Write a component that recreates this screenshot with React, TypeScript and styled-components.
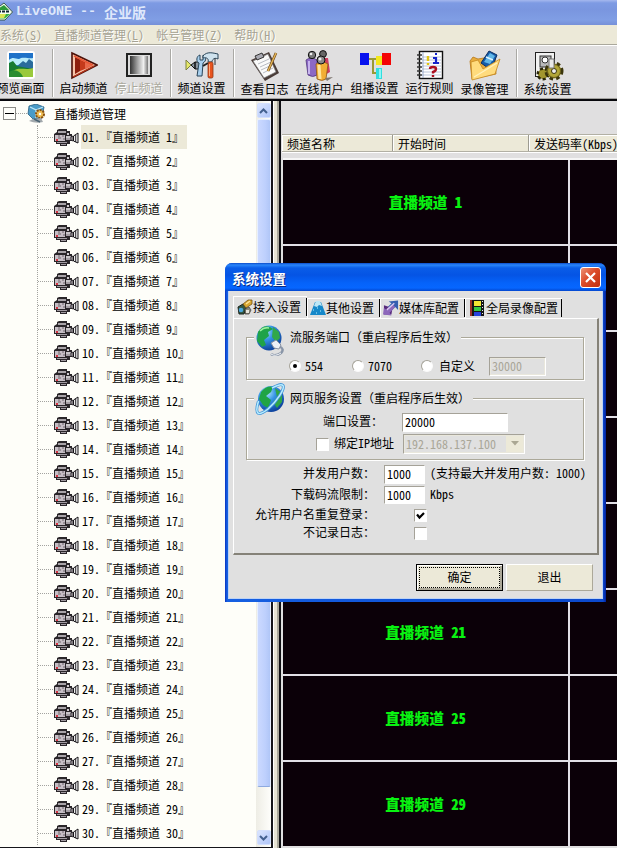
import type { ReactNode } from "react";
import styled, { createGlobalStyle } from "styled-components";

const GlobalStyle = createGlobalStyle`
    * {
        box-sizing: border-box;
    }
    body {
        margin: 0;
        overflow: hidden;
        background: #e0dfe0;
        color: #000;
        font-family: "Noto Sans CJK SC", sans-serif;
        font-feature-settings: "hwid" 1;
        font-size: 12px;
        line-height: 14px;
    }
    svg {
        display: block;
        flex: none;
    }
`;

/* ---------- icons ---------- */

const LogoIcon = () => (
    <svg width="13" height="20" viewBox="0 0 13 20">
        <path d="M-8 10 L4 1 L12.5 10 L5 18 L-2 18 Z" fill="#f4fff0" stroke="#1d3d22" strokeWidth="0.8" />
        <path d="M-4 8 L4 3 L9 8 Z" fill="#2c9a38" />
        <path d="M-3 12 H10 L5 16.5 H-1 Z" fill="#35b246" />
        <path d="M-2 9.5 H10" stroke="#123" strokeWidth="2" strokeDasharray="3 1" />
        <path d="M0 12 H6 L4 16 H0 Z" fill="#d9e453" />
    </svg>
);

const PreviewIcon = () => (
    <svg width="28" height="30" viewBox="0 0 28 30">
        <rect x="0" y="1" width="28" height="28" rx="3" fill="#fff" />
        <rect x="2" y="3" width="24" height="24" fill="#2c8fd8" />
        <path d="M2 3 H26 V9 H2 Z" fill="#1f72c8" />
        <path d="M2 10 C7 5 10 11 14 8 C19 7 22 9 26 8 V15 H2 Z" fill="#b9ecfa" />
        <path d="M9 17 L16 11 L19 13 L22 9 L26 12 V22 H9 Z" fill="#2a6c9c" />
        <path d="M2 13 L6 11 L10 16 L15 17 L26 19 V27 H2 Z" fill="#167b32" />
        <path d="M5 22 C12 16 18 21 26 18 V27 H5 Z" fill="#9ac93c" />
        <path d="M2 22 C8 18 14 22 16 27 H2 Z" fill="#2b8d31" />
    </svg>
);

const StartIcon = () => (
    <svg width="28" height="30" viewBox="0 0 28 30">
        <path d="M2 3 L27 15 L2 28 Z" fill="#f6c3a8" stroke="#4d1008" strokeWidth="1.6" />
        <path d="M5 7 L10 9.5 V21 L5 24 Z" fill="#8c1e0d" />
        <path d="M10 9.5 L15 12 V19 L10 21 Z" fill="#c53a1b" />
        <path d="M15 11 L22 14.5 V16 L15 19.5 Z" fill="#e8694a" />
        <path d="M4 6 L23 15" stroke="#e85533" strokeWidth="1.4" />
        <path d="M3 27 L24 16" stroke="#b53217" strokeWidth="1.4" />
    </svg>
);

const StopIcon = () => (
    <svg width="28" height="30" viewBox="0 0 28 30">
        <defs>
            <linearGradient id="stop-fill" x1="0" x2="1">
                <stop offset="0" stopColor="#333" />
                <stop offset="0.45" stopColor="#aaa" />
                <stop offset="0.75" stopColor="#f0f0f0" />
                <stop offset="1" stopColor="#777" />
            </linearGradient>
        </defs>
        <rect x="1" y="3" width="26" height="24" fill="#222" />
        <rect x="3" y="5" width="22" height="20" fill="#dcdcdc" />
        <rect x="5" y="6" width="18" height="18" fill="url(#stop-fill)" />
    </svg>
);

const ToolsIcon = () => (
    <svg width="34" height="30" viewBox="0 0 34 30">
        <path d="M1 10 L6 15 L1 20 Z" fill="#e6e96a" stroke="#7c8040" />
        <path d="M6 15 L10 12 V19 Z M10 12 H15 V19 H10 Z" fill="#8c969f" stroke="#111" />
        <path d="M15 5 C11 6 11 12 14 13 L12 26 H17 L18 13 C22 11 21 6 18 5 V10 H15 Z" fill="#a9d0ee" stroke="#284458" />
        <path d="M18 6 C22 1 28 3 33 4 V9 C29 7 27 10 27 12 H23 C24 9 22 7 18 8 Z" fill="#cfe2ee" stroke="#284458" />
        <rect x="23" y="12" width="5" height="16" rx="1.5" fill="#e8541e" stroke="#8e3818" strokeWidth="0.8" />
        <path d="M24.5 14 V26" stroke="#ffab7b" />
        <path d="M18 16 L23 13" stroke="#222" strokeWidth="2" />
        <path d="M30 8 V15" stroke="#26313b" />
    </svg>
);

const LogIcon = () => (
    <svg width="32" height="32" viewBox="0 0 32 32">
        <path d="M2 10 L20 2 L30 23 L16 31 Z" fill="#4a3c38" />
        <path d="M4 11 L19 4 L27 22 L15 28 Z" fill="#fafafa" stroke="#777" strokeWidth="0.7" />
        <path d="M6 6 L13 3 L15 7 L8 10 Z" fill="#a9a9b2" stroke="#333" />
        <path d="M9 14 L20 9 M11 17 L22 12 M12 20 L23 15 M14 23 L24 18" stroke="#a6a9b3" strokeWidth="0.8" />
        <path d="M27 3 L19 21" stroke="#6e4411" strokeWidth="2.6" />
        <path d="M27 3 L19 21" stroke="#e3b659" strokeWidth="1.4" />
    </svg>
);

const UsersIcon = () => (
    <svg width="30" height="32" viewBox="0 0 30 32">
        <path d="M14 8 H23 L25 22 L18 26 Z" fill="#ce3d60" />
        <path d="M1 10 Q6 6 12 10 L12 25 Q8 28 3 25 Z" fill="#8c69c4" stroke="#51377f" strokeWidth="0.8" />
        <path d="M4 11 V24" stroke="#c7b3ee" strokeWidth="2" />
        <path d="M11 14 Q17 10 23 14 L21 29 Q17 32 12 29 Z" fill="#f2ae35" stroke="#8c571b" strokeWidth="0.8" />
        <path d="M14 15 L15 29" stroke="#ffe59a" strokeWidth="3" />
        <path d="M20 28 L28 27 L22 31 Z" fill="#7d756f" />
        <circle cx="7" cy="5" r="3.7" fill="#777" stroke="#111" />
        <circle cx="18" cy="4" r="3.4" fill="#666" stroke="#111" />
        <circle cx="16" cy="10" r="4" fill="#8a8a8a" stroke="#111" />
        <circle cx="15" cy="9" r="1.5" fill="#eee" />
        <circle cx="6" cy="4" r="1.3" fill="#eee" />
    </svg>
);

const MulticastIcon = () => (
    <svg width="32" height="30" viewBox="0 0 32 30" shapeRendering="crispEdges">
        <path d="M9 9 H22 M14 9 V23 H18" stroke="#9a9a35" strokeWidth="1.5" fill="none" />
        <rect x="1" y="3" width="9" height="12" fill="#0712ee" />
        <rect x="17" y="6" width="6" height="9" fill="#f3e81b" />
        <rect x="23" y="3" width="9" height="12" fill="#f40505" />
        <rect x="17" y="18" width="6" height="11" fill="#31dede" />
        <rect x="20" y="19" width="2" height="9" fill="#8ff5f5" />
    </svg>
);

const RulesIcon = () => (
    <svg width="28" height="30" viewBox="0 0 28 30">
        <rect x="3.5" y="1.5" width="23" height="27" fill="#fff" stroke="#111" strokeWidth="1.4" />
        <path d="M6 7 H25 M6 10 H25 M6 13 H25 M6 16 H25 M6 19 H25 M6 22 H25 M6 25 H25" stroke="#aab7cf" strokeWidth="0.8" />
        <path d="M7 2 V28" stroke="#879ac0" strokeWidth="0.8" />
        <path d="M1 5 H6 M1 9 H6 M1 13 H6 M1 17 H6 M1 21 H6 M1 25 H6" stroke="#333" strokeWidth="1.3" />
        <path d="M12 6 V11 M12 13 V15" stroke="#e0c313" strokeWidth="2.4" />
        <path d="M17 8 H20 V13 M17 13 H23 M19 4 H21" stroke="#1524cb" strokeWidth="2.2" fill="none" />
        <path d="M14 19 Q14 17 17 17 Q20 17 20 19 Q20 21 17 22 V23.5 M17 25 V27" stroke="#ab1020" strokeWidth="2.4" fill="none" />
    </svg>
);

const RecordIcon = () => (
    <svg width="32" height="32" viewBox="0 0 32 32">
        <path d="M1 11 L4 7 L9 9 L26 6 L27 24 L3 29 Z" fill="#e8ad3e" stroke="#b87716" strokeWidth="0.8" />
        <path d="M12 13 L20 1 L28 5 L22 20 Z" fill="#155ca9" stroke="#0b2e63" />
        <path d="M15 12 L21 3 L26 6 L21 14 Z" fill="#62b7e8" />
        <path d="M17 7 L24 10" stroke="#dff4ff" strokeWidth="1.4" />
        <path d="M2 12 L9 10 L14 19 L31 9 L26 24 L3 30 Z" fill="#ffdb7d" stroke="#c78921" strokeWidth="0.8" />
        <path d="M5 27 L15 21 L28 13" stroke="#fff1bd" strokeWidth="1.2" fill="none" />
    </svg>
);

const GearsIcon = () => (
    <svg width="32" height="32" viewBox="0 0 32 32">
        <rect x="3.5" y="2.5" width="19" height="24" fill="#f2f2f2" stroke="#222" />
        <rect x="8" y="6" width="11" height="11" fill="#b9b9b9" stroke="#333" />
        <circle cx="13" cy="10" r="3" fill="#fff" stroke="#333" />
        <circle cx="11" cy="24" r="5" fill="#8b8126" stroke="#2c2807" strokeWidth="3" strokeDasharray="3 2" />
        <circle cx="11" cy="24" r="4" fill="#a2962e" />
        <circle cx="22" cy="21" r="7.5" fill="#a99d30" stroke="#3c360c" strokeWidth="4" strokeDasharray="3.3 3" />
        <circle cx="22" cy="21" r="6.5" fill="#b2a638" stroke="#6c621b" />
        <circle cx="22" cy="21" r="2.5" fill="#eee" stroke="#3c360c" />
        <path d="M17 9 H22 V18 H17 Z" fill="#e9e9e9" stroke="#777" />
    </svg>
);

const ServerIcon = () => (
    <svg width="20" height="20" viewBox="0 0 20 20">
        <path d="M2 2 L9 0 L17 3 L15 14 L6 15 L1 10 Z" fill="#499bc8" stroke="#245c7d" strokeWidth="0.8" />
        <path d="M3 3 L9 6 V14 M9 6 L16 3" stroke="#bee7f6" fill="none" strokeWidth="1.3" />
        <circle cx="13" cy="10" r="4" fill="#edbd52" stroke="#885010" strokeWidth="2" strokeDasharray="2 1" />
        <circle cx="13" cy="10" r="1.2" fill="#fff" />
        <path d="M2 17 Q9 20 16 18 L14 14 L6 15 Z" fill="#a2a9ad" />
        <path d="M7 15 L13 18" stroke="#4b6372" strokeWidth="1.5" />
    </svg>
);

const CameraIcon = () => (
    <svg width="26" height="19" viewBox="0 0 26 19">
        <path d="M1 6 L4 4 V2 L6 1 H14 V3 H17 V6 H19 V13 H17 V16 H14 V18 H7 V16 H3 V14 H1 Z" fill="#2a262a" />
        <path d="M5 3 H13 V5 H5 Z" fill="#a9a4a9" />
        <path d="M2 7 H12 V13 H2 Z" fill="#c6bec5" />
        <path d="M5 8 H7 M9 8 H11 M5 10 H8 M10 11 H12" stroke="#6d656c" strokeWidth="1" />
        <rect x="3" y="11" width="2" height="2" fill="#d33140" />
        <path d="M14 5 H16 V7 H14 Z" fill="#d2ccd1" />
        <path d="M13 8 H18 V12 H13 Z" fill="#a59ea4" />
        <path d="M13 9 H17" stroke="#eee" />
        <path d="M4 14 H14 V15 H4 Z M8 16 H13 V17 H8 Z" fill="#a39ca3" />
        <path d="M18 9 L20 8 V13 L18 12 Z" fill="#c8c2c7" stroke="#151317" strokeWidth="0.8" />
        <path d="M20.5 8 L25 5 V15 L20.5 13 Z" fill="#eee" stroke="#151317" strokeWidth="1" />
        <path d="M22.7 7 V14" stroke="#151317" strokeWidth="0.9" />
    </svg>
);

const PlugIcon = () => (
    <svg width="16" height="16" viewBox="0 0 16 16">
        <path d="M1 8 L6 5 L9 9 L7 15 L2 15 Z" fill="#35573f" stroke="#1b241d" />
        <circle cx="4" cy="11" r="2.3" fill="#4ba7dd" />
        <path d="M6 5 L11 1 L15 1 L15 5 L12 7 L9 9 Z" fill="#d9a832" stroke="#76500f" strokeWidth="0.8" />
        <path d="M8 10 L12 8 L14 11 L12 15 H8 Z" fill="#8f8b7a" stroke="#333" strokeWidth="0.7" />
        <path d="M9 5 L13 2" stroke="#ffe79b" strokeWidth="1.3" />
        <path d="M9 11 H12 V14 H9 Z" fill="#e8e6dd" />
    </svg>
);

const PyramidIcon = () => (
    <svg width="16" height="16" viewBox="0 0 16 16">
        <path d="M5 2 H11 L16 15 H0 Z" fill="#1688c9" />
        <path d="M6 1 H10 L12 6 L9 5 L7 7 L4 6 Z" fill="#bde6f5" />
        <path d="M3 10 H4 M7 8 H8 M10 11 H11 M6 13 H7" stroke="#b9f2ff" strokeWidth="1" />
    </svg>
);

const MediaIcon = () => (
    <svg width="16" height="16" viewBox="0 0 17 16">
        <path d="M6 1 L16 0 V10 L13 7 L8 12 L4 8 L9 3 Z" fill="#355eb0" />
        <path d="M1 5 L10 8 L9 15 H1 Z" fill="#582c7d" />
        <path d="M0 15 L1 8 L4 10 L10 4 L13 7 L7 13 L9 16 Z" fill="#8d68bb" />
        <path d="M4 10 L12 3" stroke="#d8c9f2" strokeWidth="1.5" />
    </svg>
);

const FilmIcon = () => (
    <svg width="18" height="16" viewBox="-2 0 18 16" shapeRendering="crispEdges">
        <rect width="14" height="16" fill="#151515" />
        <rect x="4" y="1" width="7" height="5" fill="#f3e532" />
        <rect x="4" y="7" width="7" height="4" fill="#35c943" />
        <rect x="4" y="12" width="7" height="4" fill="#2742dd" />
        <rect x="0" y="0" width="2" height="16" fill="#9d3029" />
        <path d="M12.5 1 V16" stroke="#eee" strokeDasharray="1 2" />
    </svg>
);

const GlobeMouseIcon = () => (
    <svg width="32" height="32" viewBox="0 0 32 32">
        <defs>
            <radialGradient id="ocean" cx="0.35" cy="0.25" r="0.8">
                <stop offset="0" stopColor="#b5e8ff" />
                <stop offset="0.4" stopColor="#3695e5" />
                <stop offset="1" stopColor="#0a3c98" />
            </radialGradient>
        </defs>
        <circle cx="15" cy="14" r="12.5" fill="url(#ocean)" />
        <path d="M4 8 Q9 0 16 3 L19 5 L14 8 L15 12 L10 16 L12 21 L8 23 L3 17 Z" fill="#1fa349" />
        <path d="M19 3 L25 8 L26 14 L22 18 L18 13 Z" fill="#31a84a" />
        <path d="M6 7 Q10 3 15 4" stroke="#9ef0a1" strokeWidth="1.6" fill="none" />
        <path d="M17 30 Q21 33 27 29 Q31 25 25 22" stroke="#8a96a8" strokeWidth="2.5" fill="none" />
        <path d="M17 19 L22 16 L27 21 L25 25 L20 24 Z" fill="#eceff6" stroke="#8790a1" />
        <path d="M17 30 Q21 33 27 29" stroke="#f5f7fa" fill="none" />
    </svg>
);

const BrowserIcon = () => (
    <svg width="32" height="32" viewBox="0 0 32 32">
        <circle cx="17" cy="16" r="13" fill="url(#ocean)" />
        <path d="M7 9 Q13 2 19 4 L17 9 L12 13 L17 17 L14 25 L9 22 L5 16 Z" fill="#20a445" />
        <path d="M21 5 L28 10 L28 19 L23 25 L19 19 L23 14 Z" fill="#2fa547" />
        <path d="M4.5 18 C0 33 5 33 14 26 C23 18 31 6 29 2.5 C27 0 22 3 18 5" fill="none" stroke="#3f94d8" strokeWidth="3" />
        <path d="M4.5 18 C0 33 5 33 14 26 C23 18 31 6 29 2.5 C27 0 22 3 18 5" fill="none" stroke="#b9edff" strokeWidth="1.5" />
    </svg>
);

const Chevron = ({ down = false }: { down?: boolean }) => (
    <svg width="9" height="6" viewBox="0 0 9 6">
        <path d={down ? "M1 1 L4.5 4.5 L8 1" : "M1 5 L4.5 1.5 L8 5"} fill="none" stroke="#43608f" strokeWidth="2" />
    </svg>
);

/* ---------- main window ---------- */

const Screen = styled.div`
    position: relative;
    display: flex;
    flex-direction: column;
    width: 617px;
    height: 848px;
    overflow: hidden;
    white-space: nowrap;
    background: #e0dfe0;
`;

const TitleBar = styled.header`
    display: flex;
    align-items: center;
    height: 25px;
    padding-bottom: 2px;
    color: #dfe8fb;
    font-size: 14px;
    font-weight: 700;
    line-height: 22px;
    background: linear-gradient(#a5b8ee 0, #7d9ae3 3px, #7a96df 10px, #809ee4 20px, #7690d8 25px);

    svg {
        margin-right: 3px;
    }
`;

const Mono = styled.span`
    font-family: "Liberation Mono", monospace;
    font-size: 13.33px;
    white-space: pre;
`;

const MenuBar = styled.nav`
    display: flex;
    align-items: center;
    gap: 12px;
    height: 19px;
    color: #a5a293;
    background: #ece9d8;
    text-shadow: 1px 1px #fff;
`;

const ToolBar = styled.div`
    display: flex;
    height: 57px;
    background: #e0dfe0;
    border-top: 1px solid #aaa89c;
    border-bottom: 2px solid #08080c;
    box-shadow: inset 0 1px #fff, inset 0 -1px #a4a3a0;
`;

const ToolButton = styled.div<{ $disabled?: boolean }>`
    display: flex;
    flex: none;
    flex-direction: column;
    align-items: center;
    justify-content: space-between;
    width: 55px;
    height: 50px;
    padding-top: 5px;
    color: ${({ $disabled }) => ($disabled ? "#aaa89c" : "#000")};
    text-shadow: ${({ $disabled }) => ($disabled ? "1px 1px #fff" : "none")};

    &:first-child {
        margin-left: -7px;
    }
`;

const ToolDivider = styled.div`
    flex: none;
    width: 8px;
    height: 48px;
    margin-top: 4px;
    background: linear-gradient(90deg, transparent 4px, #aaa9a5 4px, #aaa9a5 5px, #fff 5px, #fff 6px, transparent 6px);
`;

const Main = styled.main`
    display: flex;
    flex: 1;
    min-height: 0;
`;

const Tree = styled.aside`
    display: flex;
    width: 273px;
    background: #fefef9;
    border-right: 2px solid #15151a;
    border-bottom: 1px solid #15151a;
`;

const TreeList = styled.div`
    flex: 1;
    padding-top: 1px;
    overflow: hidden;
`;

const TreeRoot = styled.div`
    display: flex;
    align-items: center;
    height: 23px;
    padding-left: 3px;
`;

const Expander = styled.span`
    display: flex;
    align-items: center;
    justify-content: center;
    width: 13px;
    height: 13px;
    border: 1px solid #8b8b86;

    &::before {
        content: "";
        width: 9px;
        height: 1px;
        background: #000;
    }
`;

const Dots = styled.span<{ $width: number }>`
    width: ${({ $width }) => $width}px;
    border-top: 1px dotted #a3a3a0;
`;

const RootName = styled.span`
    margin-left: 7px;
`;

const Branch = styled.div`
    margin-left: 37px;
    border-left: 1px dotted #a3a3a0;
`;

const TreeItem = styled.div`
    display: flex;
    align-items: center;
    height: 24px;
`;

const ItemName = styled.span<{ $selected?: boolean }>`
    margin-left: 2px;
    padding: 0 3px 0 1px;
    line-height: 24px;
    white-space: pre;
    background: ${({ $selected }) => ($selected ? "#ece9d8" : "transparent")};
`;

const ScrollBar = styled.div`
    display: flex;
    flex-direction: column;
    align-items: center;
    width: 15px;
    padding: 2px 0 1px;
    background: linear-gradient(90deg, #eeede5, #fefefb);
`;

const ScrollButton = styled.div`
    display: flex;
    flex: none;
    align-items: center;
    justify-content: center;
    width: 14px;
    height: 15px;
    border: 1px solid #d3dffd;
    border-radius: 2px;
    background: linear-gradient(135deg, #dbe5ff, #afc5f8);
`;

const ScrollThumb = styled.div`
    flex: none;
    width: 14px;
    height: 668px;
    margin: 1px 0 43px;
    border: 1px solid #e7efff;
    border-bottom-color: #8eaae0;
    border-radius: 2px;
    background: linear-gradient(90deg, #cbd9ff, #bed0fd 60%, #b0c6f7);
`;

const Splitter = styled.div`
    width: 6px;
    background: linear-gradient(90deg, #fff 1px, #e7e4d5 1px, #e7e4d5 4px, #aaa89c 4px);
`;

const Monitor = styled.section`
    flex: 1;
    min-width: 0;
    padding: 33px 0 0 2px;
    border-left: 2px solid #101014;
    overflow: hidden;
`;

const ListHeader = styled.div`
    display: flex;
    height: 18px;
    width: 400px;
    margin-left: -1px;
    background: #ece9d8;
    border-top: 1px solid #b2b0a4;
    border-bottom: 1px solid #b2b0a4;
    box-shadow: 0 1px #fff;
`;

const HeaderCell = styled.div<{ $width: number }>`
    flex: none;
    width: ${({ $width }) => $width}px;
    padding-left: 5px;
    line-height: 17px;
    border-right: 1px solid #9d9b91;
    box-shadow: inset 1px 1px #fff;
`;

const Grid = styled.div`
    display: grid;
    grid-template-columns: 285px 100px;
    grid-auto-rows: 84px;
    gap: 2px;
    margin-top: 6px;
    width: 387px;
    border-top: 2px solid #f5f5f5;
    background: #e2dfe6;
`;

const Channel = styled.div`
    display: flex;
    align-items: center;
    justify-content: center;
    background: #0b0008;
    color: #09f211;
    font-size: 14.67px;
    font-weight: 900;
`;

/* ---------- settings dialog ---------- */

const Dialog = styled.div`
    position: absolute;
    top: 263px;
    left: 225px;
    width: 381px;
    height: 339px;
    padding: 0 3px 3px;
    border-radius: 7px 7px 0 0;
    background: linear-gradient(90deg, #0831c0, #1660e2 2px, #0b48cc 378px, #001f9c);
`;

const DialogTitle = styled.div`
    display: flex;
    align-items: center;
    justify-content: space-between;
    height: 28px;
    margin: 0 -3px;
    padding: 1px 5px 0 7px;
    color: #fff;
    font-size: 13.5px;
    font-weight: 700;
    text-shadow: 1px 1px #0a2b82;
    border-radius: 7px 7px 0 0;
    background: linear-gradient(#0b4bc9 0, #2a86fa 2px, #0a5de8 5px, #0554e4 12px, #0563fa 20px, #0666ff 25px, #0347ce 28px);
`;

const Close = styled.button`
    display: flex;
    align-items: center;
    justify-content: center;
    width: 21px;
    height: 21px;
    padding: 0;
    border: 1px solid #fff;
    border-radius: 3px;
    background: linear-gradient(135deg, #ec9277, #dc4b29 45%, #c02f0e);
`;

const DialogBody = styled.div`
    height: 308px;
    padding: 5px 2px 0 4px;
    background: #e0e0e0;
    border: 1px solid #bdd3f4;
    border-top: 0;
`;

const Tabs = styled.div`
    display: flex;
    align-items: flex-end;
    height: 22px;
`;

const Tab = styled.div<{ $width: number; $active?: boolean }>`
    display: flex;
    flex: none;
    align-items: center;
    width: ${({ $width }) => $width}px;
    height: ${({ $active }) => ($active ? 22 : 20)}px;
    padding: 0 0 ${({ $active }) => ($active ? "2px 3px" : "1px 2px")};
    border-top: 1px solid #fff;
    border-left: 1px solid #fff;

    &::after {
        content: "";
        align-self: flex-end;
        width: 1px;
        height: 18px;
        margin-left: auto;
        background: #000;
    }
`;

const TabPage = styled.div`
    width: 366px;
    height: 237px;
    padding: 18px 0 0 12px;
    border: 1px solid #fff;
    border-right: 2px solid #858278;
    border-bottom: 2px solid #858278;
`;

const Group = styled.div<{ $height: number }>`
    width: 338px;
    height: ${({ $height }) => $height}px;
    margin-bottom: 18px;
    padding-left: 7px;
    border: 1px solid #aba899;
    box-shadow: inset 1px 1px #fff, 1px 1px #fff;
`;

const Legend = styled.div<{ $lift: number }>`
    display: flex;
    width: max-content;
    height: 32px;
    margin-top: -${({ $lift }) => $lift}px;
    padding-right: 3px;
    line-height: ${({ $lift }) => $lift * 2 - 3}px;
    font-feature-settings: normal;
    text-spacing-trim: space-all;
    background: #e0e0e0;

    svg {
        margin-right: 4px;
    }
`;

const Line = styled.div<{ $height?: number; $indent?: number; $top?: number }>`
    display: flex;
    align-items: center;
    height: ${({ $height }) => $height || 20}px;
    margin-top: ${({ $top }) => $top || 0}px;
    margin-left: ${({ $indent }) => $indent || 0}px;
`;

const Radio = styled.span<{ $checked?: boolean }>`
    display: flex;
    align-items: center;
    justify-content: center;
    width: 12px;
    height: 12px;
    border: 1px solid;
    border-color: #a5a298 #fafafa #fafafa #a5a298;
    border-radius: 50%;
    background: #fff;

    &::before {
        content: "";
        width: 4px;
        height: 4px;
        border-radius: 50%;
        background: ${({ $checked }) => ($checked ? "#000" : "transparent")};
    }
`;

const Option = styled.span<{ $width: number; $gap?: number }>`
    display: flex;
    align-items: center;
    gap: ${({ $gap }) => $gap || 4}px;
    width: ${({ $width }) => $width}px;
    padding-bottom: 1px;
`;

const Input = styled.div<{ $width: number; $height: number; $disabled?: boolean }>`
    display: flex;
    align-items: center;
    width: ${({ $width }) => $width}px;
    height: ${({ $height }) => $height}px;
    padding: 0 0 1px 2px;
    color: ${({ $disabled }) => ($disabled ? "#a9a698" : "#000")};
    background: ${({ $disabled }) => ($disabled ? "#e0e0e0" : "#fff")};
    border: 1px solid;
    border-color: #a5a298 #fff #fff #a5a298;
    outline: ${({ $disabled }) => ($disabled ? "1px solid #e9e7dc" : "0")};
    outline-offset: -2px;
`;

const DropArrow = styled.span`
    display: flex;
    align-items: center;
    justify-content: center;
    width: 18px;
    height: 17px;
    margin-left: auto;
    background: #ece9d8;
`;

const Check = styled.span`
    display: flex;
    align-items: center;
    justify-content: center;
    width: 13px;
    height: 13px;
    border: 1px solid;
    border-color: #a5a298 #fff #fff #a5a298;
    background: #fff;
`;

const Label = styled.span<{ $width: number; $gap?: number }>`
    width: ${({ $width }) => $width}px;
    margin-right: ${({ $gap }) => $gap || 0}px;
    padding-bottom: 2px;
    text-align: right;
`;

const Hint = styled.span`
    margin-left: 5px;
    padding-bottom: 2px;
    white-space: pre;
`;

const Actions = styled.div`
    display: flex;
    justify-content: flex-end;
    gap: 3px;
    padding: 9px 7px 0 0;
`;

const Button = styled.button<{ $default?: boolean }>`
    width: 87px;
    height: 27px;
    padding: 2px;
    font: inherit;
    color: #000;
    background: #ece9d8;
    border: 1px solid;
    border-color: ${({ $default }) => ($default ? "#000" : "#fff #aca899 #aca899 #fff")};
    box-shadow: ${({ $default }) => ($default ? "inset 1px 1px #fff, inset -2px -2px #aca899" : "none")};

    span {
        display: block;
        height: 21px;
        line-height: 17px;
        border: 1px dotted ${({ $default }) => ($default ? "#000" : "transparent")};
    }
`;

const menus = [
    { name: "系统", hotkey: "S" },
    { name: "直播频道管理", hotkey: "L" },
    { name: "帐号管理", hotkey: "Z" },
    { name: "帮助", hotkey: "H" },
];

interface Tool {
    name: string;
    icon: ReactNode;
    disabled?: boolean;
    divider?: boolean;
}

const tools: Tool[] = [
    { name: "预览画面", icon: <PreviewIcon />, divider: true },
    { name: "启动频道", icon: <StartIcon /> },
    { name: "停止频道", icon: <StopIcon />, disabled: true, divider: true },
    { name: "频道设置", icon: <ToolsIcon />, divider: true },
    { name: "查看日志", icon: <LogIcon /> },
    { name: "在线用户", icon: <UsersIcon /> },
    { name: "组播设置", icon: <MulticastIcon /> },
    { name: "运行规则", icon: <RulesIcon /> },
    { name: "录像管理", icon: <RecordIcon />, divider: true },
    { name: "系统设置", icon: <GearsIcon /> },
];

const channels = Array.from({ length: 30 }, (_, i) => i + 1);

// rows under the dialog carry no caption
const rows = [
    { first: 1, caption: true },
    { first: 5 },
    { first: 9 },
    { first: 13 },
    { first: 17 },
    { first: 21, caption: true },
    { first: 25, caption: true },
    { first: 29, caption: true },
];

const SettingsDialog = () => (
    <Dialog>
        <DialogTitle>
            系统设置
            <Close>
                <svg width="13" height="13" viewBox="0 0 13 13">
                    <path d="M2 2 L11 11 M11 2 L2 11" stroke="#fff" strokeWidth="2.2" />
                </svg>
            </Close>
        </DialogTitle>
        <DialogBody>
            <Tabs>
                <Tab $width={74} $active>
                    <PlugIcon />
                    接入设置
                </Tab>
                <Tab $width={73}>
                    <PyramidIcon />
                    其他设置
                </Tab>
                <Tab $width={85}>
                    <MediaIcon />
                    媒体库配置
                </Tab>
                <Tab $width={97}>
                    <FilmIcon />
                    全局录像配置
                </Tab>
            </Tabs>
            <TabPage>
                <Group $height={43}>
                    <Legend $lift={14}>
                        <GlobeMouseIcon />
                        流服务端口（重启程序后生效）
                    </Legend>
                    <Line $indent={35}>
                        <Option $width={63}>
                            <Radio $checked />
                            554
                        </Option>
                        <Option $width={69}>
                            <Radio />
                            7070
                        </Option>
                        <Option $width={68} $gap={6}>
                            <Radio />
                            自定义
                        </Option>
                        <Input $width={57} $height={19} $disabled>
                            30000
                        </Input>
                    </Line>
                </Group>
                <Group $height={62}>
                    <Legend $lift={16}>
                        <BrowserIcon />
                        网页服务设置（重启程序后生效）
                    </Legend>
                    <Line $indent={69} $height={18} $top={-2}>
                        <Label $width={60} $gap={19}>端口设置：</Label>
                        <Input $width={106} $height={19}>20000</Input>
                    </Line>
                    <Line $indent={62} $top={3}>
                        <Check />
                        <Label $width={65} $gap={9}>绑定IP地址</Label>
                        <Input $width={122} $height={20} $disabled>
                            192.168.137.100
                            <DropArrow>
                                <svg width="8" height="5" viewBox="0 0 8 5">
                                    <path d="M0 0 H8 L4 4.5 Z" fill="#aaa793" />
                                </svg>
                            </DropArrow>
                        </Input>
                    </Line>
                </Group>
                <Line $top={-14}>
                    <Label $width={129} $gap={9}>并发用户数：</Label>
                    <Input $width={41} $height={19}>1000</Input>
                    <Hint>(支持最大并发用户数: 1000)</Hint>
                </Line>
                <Line $top={1}>
                    <Label $width={129} $gap={9}>下载码流限制：</Label>
                    <Input $width={41} $height={18}>1000</Input>
                    <Hint>Kbps</Hint>
                </Line>
                <Line $top={1} $height={18}>
                    <Label $width={129} $gap={39}>允许用户名重复登录：</Label>
                    <Check>
                        <svg width="9" height="9" viewBox="0 0 9 9">
                            <path d="M1 3.5 L3.5 6.5 L8 2" fill="none" stroke="#000" strokeWidth="2.2" />
                        </svg>
                    </Check>
                </Line>
                <Line $height={18}>
                    <Label $width={129} $gap={39}>不记录日志：</Label>
                    <Check />
                </Line>
            </TabPage>
            <Actions>
                <Button $default>
                    <span>确定</span>
                </Button>
                <Button>
                    <span>退出</span>
                </Button>
            </Actions>
        </DialogBody>
    </Dialog>
);

const App = () => {
    return (
        <Screen>
            <GlobalStyle />
            <TitleBar>
                <LogoIcon />
                <Mono>{"LiveONE -- "}</Mono>
                企业版
            </TitleBar>
            <MenuBar>
                {menus.map(({ name, hotkey }) => (
                    <span key={name}>
                        {name}(<u>{hotkey}</u>)
                    </span>
                ))}
            </MenuBar>
            <ToolBar>
                {tools.map(({ name, icon, disabled, divider }) => [
                    <ToolButton key={name} $disabled={disabled}>
                        {icon}
                        {name}
                    </ToolButton>,
                    divider && <ToolDivider key={`${name}-divider`} />,
                ])}
            </ToolBar>
            <Main>
                <Tree>
                    <TreeList>
                        <TreeRoot>
                            <Expander />
                            <Dots $width={11} />
                            <ServerIcon />
                            <RootName>直播频道管理</RootName>
                        </TreeRoot>
                        <Branch>
                            {channels.map((n) => (
                                <TreeItem key={n}>
                                    <Dots $width={15} />
                                    <CameraIcon />
                                    <ItemName $selected={n === 1}>
                                        {`${String(n).padStart(2, "0")}.『直播频道 ${n}』`}
                                    </ItemName>
                                </TreeItem>
                            ))}
                        </Branch>
                    </TreeList>
                    <ScrollBar>
                        <ScrollButton>
                            <Chevron />
                        </ScrollButton>
                        <ScrollThumb />
                        <ScrollButton>
                            <Chevron down />
                        </ScrollButton>
                    </ScrollBar>
                </Tree>
                <Splitter />
                <Monitor>
                    <ListHeader>
                        <HeaderCell $width={111}>频道名称</HeaderCell>
                        <HeaderCell $width={136}>开始时间</HeaderCell>
                        <HeaderCell $width={140}>发送码率(Kbps)</HeaderCell>
                    </ListHeader>
                    <Grid>
                        {rows.map(({ first, caption }) => [
                            <Channel key={first}>{caption && `直播频道 ${first}`}</Channel>,
                            <Channel key={`${first}-next`} />,
                        ])}
                    </Grid>
                </Monitor>
            </Main>
            <SettingsDialog />
        </Screen>
    );
};

export default App;
